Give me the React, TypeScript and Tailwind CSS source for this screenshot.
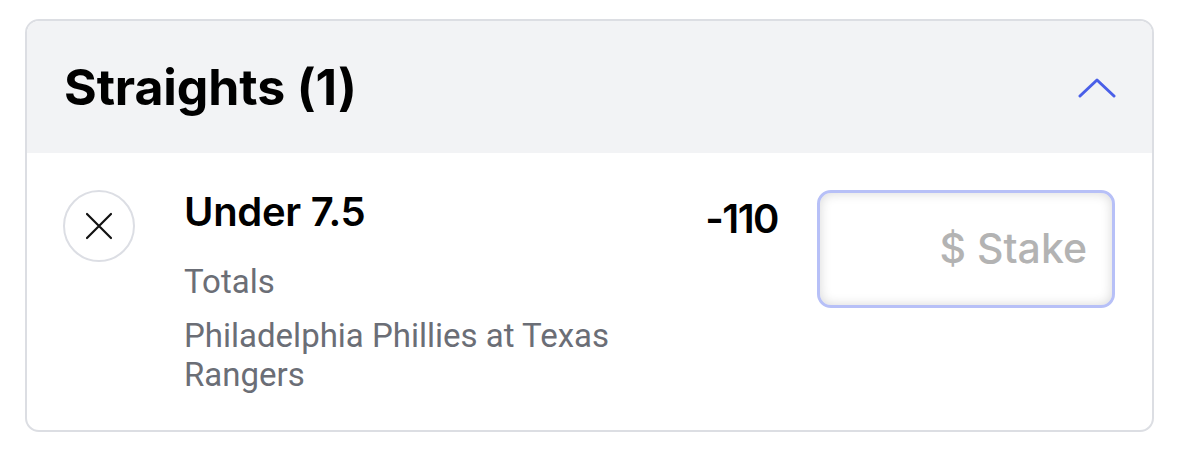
import React from 'react';

const App = () => {
  return (
    <div className="min-h-screen bg-white px-[25px] pt-[19px] font-['Roboto','Liberation_Sans',sans-serif]">
      <div className="rounded-[14px] border-2 border-[#dcdee3] overflow-hidden">
        {/* Header */}
        <div className="h-[132px] bg-[#f2f3f5] flex items-center justify-between pl-[37px] pr-[36px]">
          <h2 className="text-[50px] leading-[60px] font-bold text-black tracking-[-0.1px] font-['Inter',sans-serif]">Straights (1)</h2>
          <svg width="38" height="22" viewBox="0 0 38 22" fill="none" className="mt-[2px]">
            <path d="M2 19 L19 3 L36 19" stroke="#4a5fe8" strokeWidth="3" strokeLinecap="round" strokeLinejoin="round" />
          </svg>
        </div>

        {/* Bet row */}
        <div className="flex items-start pl-[36px] pr-[37px] pt-[35px] pb-[36px]">
          <button className="w-[72px] h-[72px] shrink-0 rounded-full border-2 border-[#dcdee4] flex items-center justify-center mt-[2px]">
            <svg width="28" height="28" viewBox="0 0 28 28" fill="none">
              <path d="M2 2 L26 26 M26 2 L2 26" stroke="#111" strokeWidth="2.2" strokeLinecap="round" />
            </svg>
          </button>

          <div className="ml-[49px] flex-1 min-w-0">
            <div className="text-[40px] font-semibold text-black leading-[48px] font-['Inter',sans-serif] tracking-[-0.3px]">Under 7.5</div>
            <div className="mt-[26px] text-[33px] text-[#6b6e76] leading-[39px] max-w-[470px]">
              <div>Totals</div>
              <div className="mt-[15px]">Philadelphia Phillies at Texas Rangers</div>
            </div>
          </div>

          <div className="text-[40px] font-semibold text-black leading-[48px] mt-[7px] mr-[39px] font-['Inter',sans-serif] tracking-[-1.5px]">-110</div>

          <div className="w-[298px] h-[118px] mt-[2px] shrink-0 rounded-[14px] border-[3px] border-[#b7c0f7] bg-white shadow-[inset_0_0_12px_rgba(0,0,0,0.16)] flex items-center justify-end pr-[25px]">
            <span className="text-[41px] text-[#b3b3b3] font-medium font-['Inter',sans-serif]">$ Stake</span>
          </div>
        </div>
      </div>
    </div>
  );
};

export default App;
